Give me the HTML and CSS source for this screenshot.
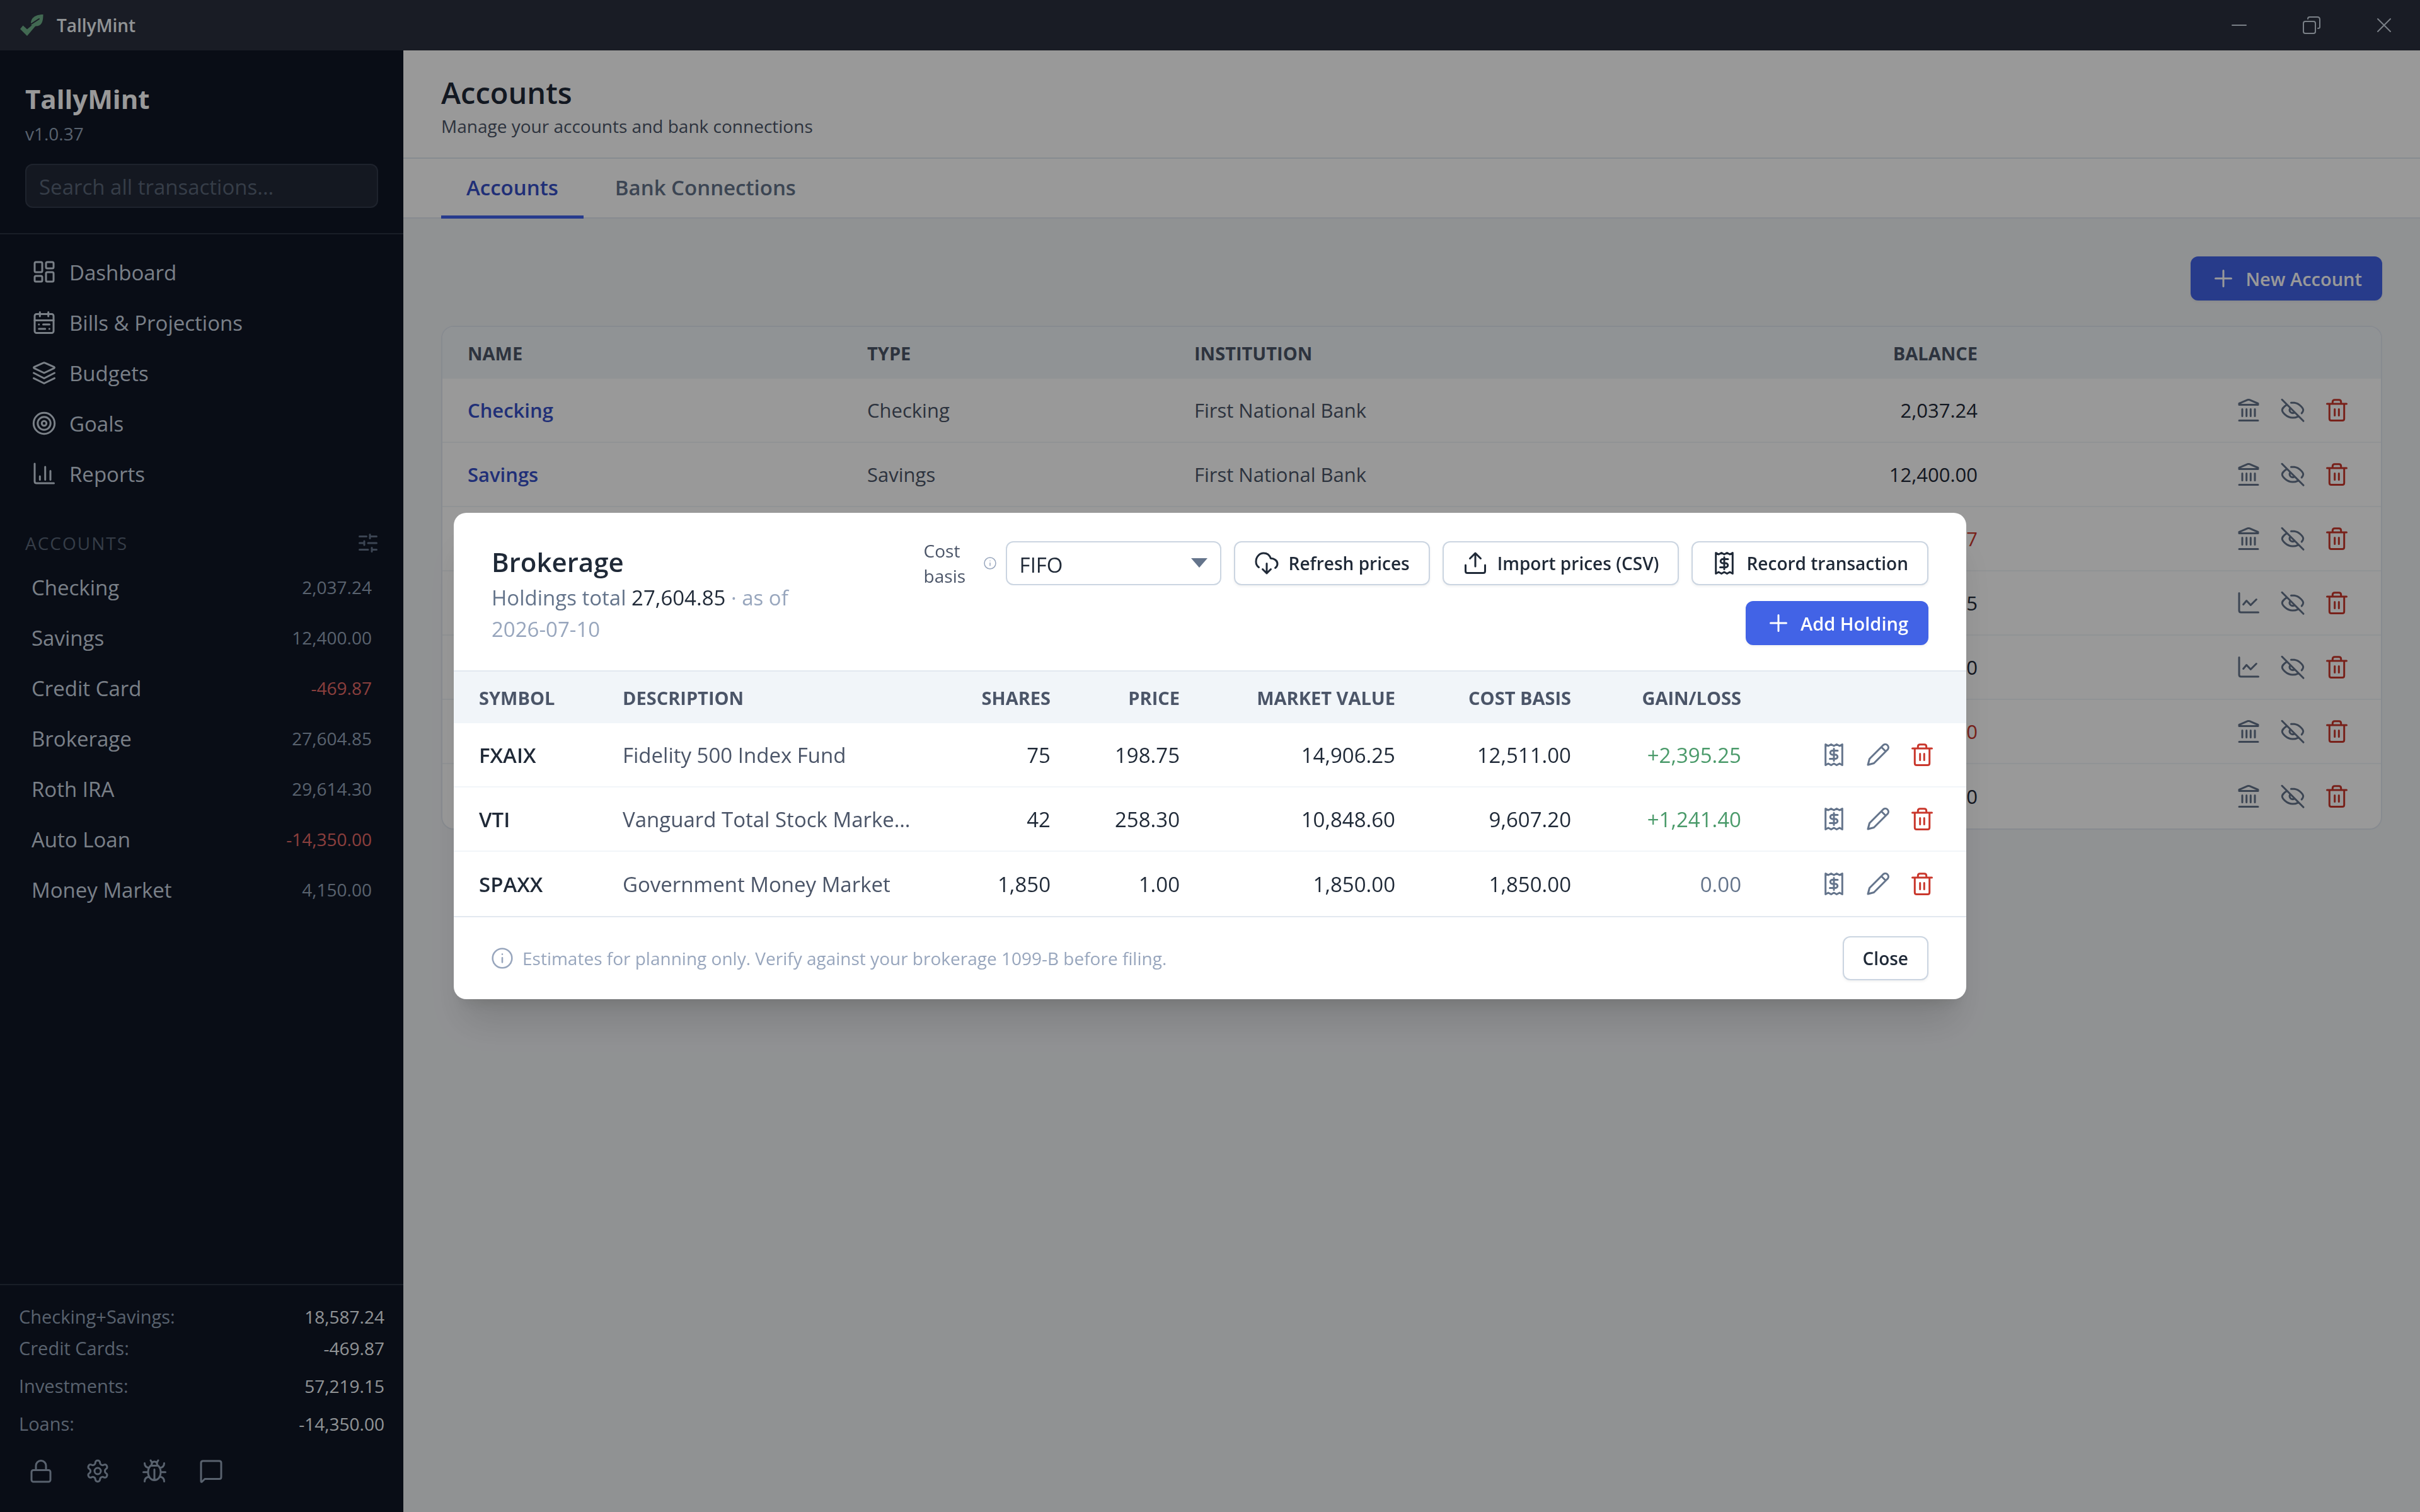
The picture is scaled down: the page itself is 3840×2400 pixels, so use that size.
FILE: index.html
```html
<!DOCTYPE html>
<html lang="en">
<head>
  <meta charset="UTF-8">
  <title>TallyMint</title>
  <link rel="stylesheet" href="styles.css">
</head>
<body>

  <!-- icon set -->
  <svg class="sprite" aria-hidden="true">
    <symbol id="i-dashboard" viewBox="0 0 40 40">
      <rect x="5" y="4" width="12" height="16" rx="2"/><rect x="23" y="4" width="12" height="10" rx="2"/>
      <rect x="5" y="26" width="12" height="9" rx="2"/><rect x="23" y="20" width="12" height="15" rx="2"/>
    </symbol>
    <symbol id="i-calendar" viewBox="0 0 40 40">
      <rect x="5" y="6.5" width="30" height="30" rx="3"/>
      <path d="M5 16.5h30M13.3 3.5V10M26.7 3.5V10M11.7 23h.1M18.5 23h10M11.7 30h10M28.3 30h.1"/>
    </symbol>
    <symbol id="i-layers" viewBox="0 0 40 40">
      <path d="M18.500 4.200q1.500-.7 3 0L35.500 10.300q2 1.200 0 2.400L20 20 4.500 12.700q-2-1.200 0-2.400zM3.500 20L20 28.500 36.500 20M3.500 28.300L20 36.500l16.500-8.200"/>
    </symbol>
    <symbol id="i-target" viewBox="0 0 40 40">
      <circle cx="20" cy="20" r="16.7"/><circle cx="20" cy="20" r="10.2"/><circle cx="20" cy="20" r="3.7"/>
    </symbol>
    <symbol id="i-bars" viewBox="0 0 40 40">
      <path d="M5 4v28q0 3 3 3h27.5M13.3 24v5.5M21.7 9v20.5M30 15.5v14"/>
    </symbol>
    <symbol id="i-sliders" viewBox="0 0 32 32">
      <path d="M2.5 5.5h11M19 2.500v6M19 5.5h10.500M2.500 16H10M10 13v6M16 16h13.500M2.500 26.500H16M22 23.500v6M22 26.500h7.500"/>
    </symbol>
    <symbol id="i-lock" viewBox="0 0 40 40">
      <rect x="5" y="18.5" width="30" height="18.5" rx="3"/><path d="M12 18.5v-7a8 8 0 0 1 16 0v7"/>
    </symbol>
    <symbol id="i-gear" viewBox="0 0 24 24">
      <g stroke-width="1.8"><path d="M12.22 2h-.44a2 2 0 0 0-2 2v.18a2 2 0 0 1-1 1.73l-.43.25a2 2 0 0 1-2 0l-.15-.08a2 2 0 0 0-2.73.73l-.22.38a2 2 0 0 0 .73 2.73l.15.1a2 2 0 0 1 1 1.72v.51a2 2 0 0 1-1 1.74l-.15.09a2 2 0 0 0-.73 2.73l.22.38a2 2 0 0 0 2.73.73l.15-.08a2 2 0 0 1 2 0l.43.25a2 2 0 0 1 1 1.73V20a2 2 0 0 0 2 2h.44a2 2 0 0 0 2-2v-.18a2 2 0 0 1 1-1.73l.43-.25a2 2 0 0 1 2 0l.15.08a2 2 0 0 0 2.73-.73l.22-.39a2 2 0 0 0-.73-2.73l-.15-.08a2 2 0 0 1-1-1.74v-.5a2 2 0 0 1 1-1.74l.15-.09a2 2 0 0 0 .73-2.73l-.22-.38a2 2 0 0 0-2.73-.73l-.15.08a2 2 0 0 1-2 0l-.43-.25a2 2 0 0 1-1-1.73V4a2 2 0 0 0-2-2z"/><circle cx="12" cy="12" r="3"/></g>
    </symbol>
    <symbol id="i-bug" viewBox="0 0 40 40">
      <path d="M14 11.5h12q4 3.5 4 10.5c0 7-4 12.5-10 12.5S10 29 10 22q0-7 4-10.5zM15.5 11q0-6 4.5-6t4.5 6M16 6.5L14 3M24 6.5L26 3M20 17.5V34M2.500 21.700H10M30 21.700h7.500M4.500 7.500q0 6.500 7 7.500M35.500 7.500q0 6.500-7 7.500M4.500 36.500q0-6.500 7-7.500M35.500 36.500q0-6.500-7-7.500"/>
    </symbol>
    <symbol id="i-chat" viewBox="0 0 40 40">
      <path d="M4 36V7q0-3 3-3h26q3 0 3 3v22.500q0 3-3 3H10L5.500 37q-1.500 1-1.500-1z"/>
    </symbol>
    <symbol id="i-bank" viewBox="0 0 40 40">
      <path d="M5 9.500l13.500-5.800q1.500-.6 3 0L35 9.500v2H5zM10 18.500v11M16.700 18.500v11M23.300 18.500v11M30 18.500v11M5 36.500h30"/>
    </symbol>
    <symbol id="i-chart" viewBox="0 0 40 40">
      <path d="M5 4.500V32q0 3 3 3h27.500M11.700 22.500l5-6 6.600 7 9-9"/>
    </symbol>
    <symbol id="i-eye-off" viewBox="0 0 40 40">
      <path d="M3 3.300L37 37.300M9.500 12.300C5.500 15 3.300 18.500 3.300 20c0 3 6.700 12 16.700 12q4.500 0 8-1.700M17.500 8.300Q20 8 22.500 8.300C31 9.500 36.700 17 36.700 20q0 1.800-2.500 5M15.800 16.800q-1.800 4 .9 6.500 3 2.400 6.800.4"/>
    </symbol>
    <symbol id="i-trash" viewBox="0 0 40 40">
      <path d="M4.500 10h31M8.300 10v23.500q0 3 3 3h17.400q3 0 3-3V10M13.300 10V7q0-3.300 3.300-3.300h6.800q3.300 0 3.300 3.300v3M16.700 18.500v10M23.300 18.500v10"/>
    </symbol>
    <symbol id="i-receipt" viewBox="0 0 40 40">
      <path d="M6.700 3.500l4.400 2.500 4.500-2.500L20 6l4.400-2.500L28.900 6l4.400-2.500v33L28.900 34l-4.500 2.500L20 34l-4.400 2.500-4.500-2.500-4.400 2.500z"/>
      <path d="M26 13.500h-8.500a3.200 3.200 0 0 0 0 6.500h5a3.200 3.200 0 0 1 0 6.500h-9M20 10.500v19"/>
    </symbol>
    <symbol id="i-pencil" viewBox="0 0 40 40">
      <path d="M4 36L6.500 26.500 28.500 4.500a5 5 0 0 1 7 7L13.500 33.500zM25.500 8l6.500 6.500"/>
    </symbol>
    <symbol id="i-cloud-down" viewBox="0 0 40 40">
      <path d="M7.500 26.500C4.500 24.500 3 21.500 3 17.500 3 9.500 9 4 15 4q8.500 0 11.300 8.300C32 12.300 37 16 37 21q0 4-3.500 6.500M20 20.500V36M13.500 29.500L20 36l6.500-6.500"/>
    </symbol>
    <symbol id="i-upload" viewBox="0 0 40 40">
      <path d="M20 25V5M11.500 12.500L20 4l8.500 8.500M4.500 23v9.500q0 3 3 3h25q3 0 3-3V23"/>
    </symbol>
    <symbol id="i-plus" viewBox="0 0 40 40">
      <path d="M20 7.500v25M7.500 20h25"/>
    </symbol>
    <symbol id="i-info" viewBox="0 0 40 40">
      <circle cx="20" cy="20" r="18"/><path d="M20 19v8.500M20 12.500v.1"/>
    </symbol>
  </svg>

  <div class="app">
    <header class="titlebar">
      <svg class="logo" viewBox="0 0 40 40" aria-hidden="true">
        <path d="M2 26l4.500-5.500 6.500 6L22 19l5 1.500L13 37z"/>
        <path d="M19.500 20C17 9 26 3 38.500 3c0 11-2 19-13 18.500z"/>
        <path class="vein" d="M19 18.500L32 10"/>
      </svg>
      <span class="titlebar-name">TallyMint</span>
      <div class="window-buttons">
        <button type="button" aria-label="Minimize"><svg viewBox="0 0 30 30"><path d="M4 15h22"/></svg></button>
        <button type="button" aria-label="Restore"><svg viewBox="0 0 30 30"><rect x="2" y="9" width="19" height="19" rx="3"/><path d="M9 5q0-3 3-3h12q4 0 4 4v12q0 2-3 2"/></svg></button>
        <button type="button" aria-label="Close window"><svg viewBox="0 0 30 30"><path d="M5 5l20 20M25 5L5 25"/></svg></button>
      </div>
    </header>

    <aside class="sidebar">
      <div class="brand">
        <div class="brand-name">TallyMint</div>
        <div class="version">v1.0.37</div>
        <input type="search" class="search" placeholder="Search all transactions..." aria-label="Search all transactions">
      </div>

      <nav class="nav">
        <a href="#dashboard"><svg class="icon"><use href="#i-dashboard"/></svg>Dashboard</a>
        <a href="#bills"><svg class="icon"><use href="#i-calendar"/></svg>Bills &amp; Projections</a>
        <a href="#budgets"><svg class="icon"><use href="#i-layers"/></svg>Budgets</a>
        <a href="#goals"><svg class="icon"><use href="#i-target"/></svg>Goals</a>
        <a href="#reports"><svg class="icon"><use href="#i-bars"/></svg>Reports</a>
      </nav>

      <div class="side-heading">
        <span>ACCOUNTS</span>
        <button type="button" aria-label="Account display options"><svg><use href="#i-sliders"/></svg></button>
      </div>
      <div class="side-accounts">
        <a href="#checking">Checking<span>2,037.24</span></a>
        <a href="#savings">Savings<span>12,400.00</span></a>
        <a href="#credit-card">Credit Card<span class="neg">-469.87</span></a>
        <a href="#brokerage">Brokerage<span>27,604.85</span></a>
        <a href="#roth-ira">Roth IRA<span>29,614.30</span></a>
        <a href="#auto-loan">Auto Loan<span class="neg">-14,350.00</span></a>
        <a href="#money-market">Money Market<span>4,150.00</span></a>
      </div>

      <div class="side-footer">
        <div class="total">Checking+Savings:<span>18,587.24</span></div>
        <div class="total">Credit Cards:<span>-469.87</span></div>
        <div class="total spaced">Investments:<span>57,219.15</span></div>
        <div class="total spaced">Loans:<span>-14,350.00</span></div>
        <div class="side-tools">
          <button type="button" aria-label="Lock"><svg class="icon"><use href="#i-lock"/></svg></button>
          <button type="button" aria-label="Settings"><svg class="icon"><use href="#i-gear"/></svg></button>
          <button type="button" aria-label="Report a bug"><svg class="icon"><use href="#i-bug"/></svg></button>
          <button type="button" aria-label="Feedback"><svg class="icon"><use href="#i-chat"/></svg></button>
        </div>
      </div>
    </aside>

    <main class="main">
      <div class="page-header">
        <h1>Accounts</h1>
        <p>Manage your accounts and bank connections</p>
      </div>
      <div class="tabs">
        <a href="#accounts" class="tab active">Accounts</a>
        <a href="#connections" class="tab">Bank Connections</a>
      </div>

      <div class="content">
        <div class="toolbar">
          <button type="button" class="btn btn-primary"><svg class="icon"><use href="#i-plus"/></svg>New Account</button>
        </div>

        <div class="card">
          <table class="accounts">
            <thead>
              <tr><th class="c-name">NAME</th><th class="c-type">TYPE</th><th>INSTITUTION</th><th class="c-balance num">BALANCE</th><th class="c-tools"></th></tr>
            </thead>
            <tbody>
              <tr>
                <td><a href="#checking">Checking</a></td><td>Checking</td><td>First National Bank</td><td class="num">2,037.24</td>
                <td><div class="tools"><button type="button" aria-label="Register"><svg class="icon"><use href="#i-bank"/></svg></button><button type="button" aria-label="Hide"><svg class="icon"><use href="#i-eye-off"/></svg></button><button type="button" class="danger" aria-label="Delete"><svg class="icon"><use href="#i-trash"/></svg></button></div></td>
              </tr>
              <tr>
                <td><a href="#savings">Savings</a></td><td>Savings</td><td>First National Bank</td><td class="num">12,400.00</td>
                <td><div class="tools"><button type="button" aria-label="Register"><svg class="icon"><use href="#i-bank"/></svg></button><button type="button" aria-label="Hide"><svg class="icon"><use href="#i-eye-off"/></svg></button><button type="button" class="danger" aria-label="Delete"><svg class="icon"><use href="#i-trash"/></svg></button></div></td>
              </tr>
              <tr>
                <td><a href="#credit-card">Credit Card</a></td><td></td><td></td><td class="num neg">-469.87</td>
                <td><div class="tools"><button type="button" aria-label="Register"><svg class="icon"><use href="#i-bank"/></svg></button><button type="button" aria-label="Hide"><svg class="icon"><use href="#i-eye-off"/></svg></button><button type="button" class="danger" aria-label="Delete"><svg class="icon"><use href="#i-trash"/></svg></button></div></td>
              </tr>
              <tr>
                <td><a href="#brokerage">Brokerage</a></td><td></td><td></td><td class="num">27,604.85</td>
                <td><div class="tools"><button type="button" aria-label="Holdings"><svg class="icon"><use href="#i-chart"/></svg></button><button type="button" aria-label="Hide"><svg class="icon"><use href="#i-eye-off"/></svg></button><button type="button" class="danger" aria-label="Delete"><svg class="icon"><use href="#i-trash"/></svg></button></div></td>
              </tr>
              <tr>
                <td><a href="#roth-ira">Roth IRA</a></td><td></td><td></td><td class="num">29,614.30</td>
                <td><div class="tools"><button type="button" aria-label="Holdings"><svg class="icon"><use href="#i-chart"/></svg></button><button type="button" aria-label="Hide"><svg class="icon"><use href="#i-eye-off"/></svg></button><button type="button" class="danger" aria-label="Delete"><svg class="icon"><use href="#i-trash"/></svg></button></div></td>
              </tr>
              <tr>
                <td><a href="#auto-loan">Auto Loan</a></td><td></td><td></td><td class="num neg">-14,350.00</td>
                <td><div class="tools"><button type="button" aria-label="Register"><svg class="icon"><use href="#i-bank"/></svg></button><button type="button" aria-label="Hide"><svg class="icon"><use href="#i-eye-off"/></svg></button><button type="button" class="danger" aria-label="Delete"><svg class="icon"><use href="#i-trash"/></svg></button></div></td>
              </tr>
              <tr>
                <td><a href="#money-market">Money Market</a></td><td></td><td></td><td class="num">4,150.00</td>
                <td><div class="tools"><button type="button" aria-label="Register"><svg class="icon"><use href="#i-bank"/></svg></button><button type="button" aria-label="Hide"><svg class="icon"><use href="#i-eye-off"/></svg></button><button type="button" class="danger" aria-label="Delete"><svg class="icon"><use href="#i-trash"/></svg></button></div></td>
              </tr>
            </tbody>
          </table>
        </div>
      </div>
    </main>
  </div>

  <div class="overlay">
    <div class="modal" role="dialog" aria-modal="true" aria-labelledby="modal-title">
      <div class="modal-header">
        <div class="modal-heading">
          <h2 id="modal-title">Brokerage</h2>
          <p>Holdings total <strong>27,604.85</strong> <span>· as of 2026-07-10</span></p>
        </div>
        <div class="modal-controls">
          <div class="cost-basis">
            <label for="cost-basis">Cost basis</label>
            <svg class="hint"><use href="#i-info"/></svg>
            <div class="select-wrap">
              <select id="cost-basis">
                <option>FIFO</option>
                <option>LIFO</option>
                <option>Average</option>
              </select>
            </div>
          </div>
          <button type="button" class="btn"><svg class="icon"><use href="#i-cloud-down"/></svg>Refresh prices</button>
          <button type="button" class="btn"><svg class="icon"><use href="#i-upload"/></svg>Import prices (CSV)</button>
          <button type="button" class="btn"><svg class="icon"><use href="#i-receipt"/></svg>Record transaction</button>
          <button type="button" class="btn btn-primary"><svg class="icon"><use href="#i-plus"/></svg>Add Holding</button>
        </div>
      </div>

      <table class="holdings">
        <thead>
          <tr>
            <th class="h-symbol">SYMBOL</th><th>DESCRIPTION</th><th class="h-shares num">SHARES</th><th class="h-price num">PRICE</th>
            <th class="h-value num">MARKET VALUE</th><th class="h-cost num">COST BASIS</th><th class="h-gain num">GAIN/LOSS</th><th class="h-tools"></th>
          </tr>
        </thead>
        <tbody>
          <tr>
            <td class="symbol">FXAIX</td><td class="desc">Fidelity 500 Index Fund</td><td class="num">75</td><td class="num">198.75</td>
            <td class="num">14,906.25</td><td class="num">12,511.00</td><td class="num gain">+2,395.25</td>
            <td><div class="tools"><button type="button" aria-label="Record transaction"><svg class="icon"><use href="#i-receipt"/></svg></button><button type="button" aria-label="Edit"><svg class="icon"><use href="#i-pencil"/></svg></button><button type="button" class="danger" aria-label="Delete"><svg class="icon"><use href="#i-trash"/></svg></button></div></td>
          </tr>
          <tr>
            <td class="symbol">VTI</td><td class="desc">Vanguard Total Stock Market ETF</td><td class="num">42</td><td class="num">258.30</td>
            <td class="num">10,848.60</td><td class="num">9,607.20</td><td class="num gain">+1,241.40</td>
            <td><div class="tools"><button type="button" aria-label="Record transaction"><svg class="icon"><use href="#i-receipt"/></svg></button><button type="button" aria-label="Edit"><svg class="icon"><use href="#i-pencil"/></svg></button><button type="button" class="danger" aria-label="Delete"><svg class="icon"><use href="#i-trash"/></svg></button></div></td>
          </tr>
          <tr>
            <td class="symbol">SPAXX</td><td class="desc">Government Money Market</td><td class="num">1,850</td><td class="num">1.00</td>
            <td class="num">1,850.00</td><td class="num">1,850.00</td><td class="num flat">0.00</td>
            <td><div class="tools"><button type="button" aria-label="Record transaction"><svg class="icon"><use href="#i-receipt"/></svg></button><button type="button" aria-label="Edit"><svg class="icon"><use href="#i-pencil"/></svg></button><button type="button" class="danger" aria-label="Delete"><svg class="icon"><use href="#i-trash"/></svg></button></div></td>
          </tr>
        </tbody>
      </table>

      <div class="modal-footer">
        <svg class="note-icon"><use href="#i-info"/></svg>
        <span>Estimates for planning only. Verify against your brokerage 1099-B before filing.</span>
        <button type="button" class="btn">Close</button>
      </div>
    </div>
  </div>

</body>
</html>
```
FILE: styles.css
```css
* {
  box-sizing: border-box;
}

body {
  margin: 0;
  font-family: 'Open Sans', 'Noto Sans', sans-serif;
  font-size: 33px;
  color: #1f2937;
}

button,
input,
select {
  font-family: inherit;
}

a {
  color: inherit;
  text-decoration: none;
}

h1,
h2,
p {
  margin: 0;
}

svg {
  fill: none;
  stroke: currentColor;
  stroke-width: 3;
  stroke-linecap: round;
  stroke-linejoin: round;
  flex-shrink: 0;
}

.sprite {
  display: none;
}

.icon {
  display: block;
  width: 40px;
  height: 40px;
}

.num {
  text-align: right;
}

/* shell */

.app {
  display: grid;
  grid-template-columns: 640px 1fr;
  grid-template-rows: 80px 1fr;
  height: 100vh;
  overflow: hidden;
}

.titlebar {
  grid-column: 1 / -1;
  display: flex;
  align-items: center;
  gap: 20px;
  padding-left: 30px;
  background: #2a303e;
  color: #f1f5f9;
}

.logo {
  width: 40px;
  height: 40px;
  fill: #6eaf89;
  stroke: none;
}

.logo .vein {
  stroke: #2a303e;
  stroke-width: 2;
}

.titlebar-name {
  font-size: 28px;
  font-weight: 600;
}

.window-buttons {
  display: flex;
  align-self: stretch;
  margin-left: auto;
}

.window-buttons button {
  display: flex;
  align-items: center;
  justify-content: center;
  width: 115px;
  padding: 0;
  border: 0;
  background: none;
  color: #cbd5e1;
}

.window-buttons svg {
  width: 30px;
  height: 30px;
  stroke-width: 2;
}

/* sidebar */

.sidebar {
  display: flex;
  flex-direction: column;
  background: #0f1626;
  color: #cbd5e1;
}

.brand {
  padding: 42px 40px 40px;
  border-bottom: 2px solid #2b3241;
}

.brand-name {
  font-size: 42px;
  font-weight: 700;
  line-height: 70px;
  color: #fff;
}

.version {
  font-size: 28px;
  line-height: 40px;
  color: #94a3b8;
}

.search {
  display: block;
  width: 100%;
  height: 70px;
  margin-top: 28px;
  padding: 2px 20px 0;
  border: 2px solid #333b4b;
  border-radius: 12px;
  background: #222938;
  color: #f1f5f9;
  font-size: 33px;
}

.search::placeholder {
  color: #5b6779;
}

.nav {
  padding: 20px 0 40px;
}

.nav a {
  display: flex;
  align-items: center;
  gap: 20px;
  height: 80px;
  padding: 0 50px;
}

.side-heading {
  display: flex;
  align-items: center;
  justify-content: space-between;
  height: 60px;
  padding: 0 40px;
  font-size: 28px;
  letter-spacing: 2px;
  color: #5b6779;
}

.side-heading button {
  padding: 0;
  border: 0;
  background: none;
  color: #64748b;
}

.side-heading svg {
  display: block;
  width: 32px;
  height: 32px;
}

.side-accounts {
  flex: 1;
}

.side-accounts a {
  display: flex;
  align-items: center;
  justify-content: space-between;
  height: 80px;
  padding: 0 50px;
}

.side-accounts span {
  font-size: 28px;
  color: #94a3b8;
}

.side-accounts .neg {
  color: #e66a66;
}

.side-footer {
  padding: 25px 30px 35px;
  border-top: 2px solid #2b3241;
  font-size: 29px;
  line-height: 50px;
  color: #94a3b8;
}

.total {
  display: flex;
  justify-content: space-between;
}

.total span {
  font-size: 28px;
  color: #f1f5f9;
}

.spaced {
  margin-top: 10px;
}

.side-tools {
  display: flex;
  margin: 20px -10px 0;
}

.side-tools button {
  width: 90px;
  height: 60px;
  padding: 0 25px;
  border: 0;
  background: none;
  color: #94a3b8;
}

/* main */

.main {
  background: #f1f3f6;
}

.page-header {
  padding: 35px 60px 30px;
  border-bottom: 2px solid #e2e8f0;
  background: #fff;
}

.page-header h1 {
  font-size: 47px;
  font-weight: 600;
  line-height: 65px;
}

.page-header p {
  font-size: 28px;
  line-height: 40px;
  color: #4b5568;
}

.tabs {
  display: flex;
  gap: 10px;
  height: 95px;
  padding: 0 60px;
  border-bottom: 2px solid #e2e8f0;
  background: #fff;
}

.tab {
  height: 95px;
  padding: 0 40px;
  border-bottom: 5px solid transparent;
  font-weight: 600;
  line-height: 92px;
  color: #64748b;
}

.tab.active {
  border-color: #4263eb;
  color: #364fc7;
}

.content {
  padding: 60px;
}

.toolbar {
  display: flex;
  justify-content: flex-end;
  margin-bottom: 40px;
}

.btn {
  display: inline-flex;
  align-items: center;
  gap: 15px;
  height: 70px;
  padding: 0 30px;
  border: 2px solid #cbd5e1;
  border-radius: 12px;
  background: #fff;
  box-shadow: 0 2px 4px rgba(0, 0, 0, 0.06);
  color: #1f2937;
  font-size: 28px;
  font-weight: 600;
  white-space: nowrap;
  cursor: pointer;
}

.btn-primary {
  border-color: #4263e6;
  background: #4263e6;
  color: #fff;
  font-size: 29px;
}

.card {
  overflow: hidden;
  border: 2px solid #e2e8f0;
  border-radius: 20px;
  background: #fff;
}

/* tables */

table {
  width: 100%;
  table-layout: fixed;
  border-collapse: separate;
  border-spacing: 0;
}

th {
  height: 82px;
  padding: 0 40px;
  background: #f1f5f9;
  color: #4b5568;
  font-size: 29px;
  font-weight: 700;
  text-align: left;
}

th.num {
  text-align: right;
}

td {
  height: 102px;
  padding: 0 40px;
  border-bottom: 2px solid #f1f5f9;
  white-space: nowrap;
}

tbody tr:last-child td {
  border-bottom: 0;
}

.accounts td {
  font-size: 31px;
  color: #4b5568;
}

.accounts td.num {
  color: #1f2937;
}

.accounts td.neg {
  color: #c9372c;
}

.accounts td a {
  font-weight: 600;
  color: #364fc7;
}

.c-name {
  width: 634px;
}

.c-type {
  width: 519px;
}

.c-balance,
.c-tools {
  width: 600px;
}

.tools {
  display: flex;
  justify-content: flex-end;
  gap: 10px;
}

.tools button {
  padding: 10px;
  border: 0;
  background: none;
  color: #64748b;
  cursor: pointer;
}

.tools .danger {
  color: #c9372c;
}

/* holdings dialog */

.overlay {
  position: fixed;
  inset: 0;
  display: flex;
  align-items: center;
  justify-content: center;
  background: rgba(0, 0, 0, 0.4);
}

.modal {
  width: 2400px;
  max-width: 95%;
  overflow: hidden;
  border-radius: 20px;
  background: #fff;
  box-shadow: 0 50px 62px -12px rgba(0, 0, 0, 0.12), 0 20px 25px -15px rgba(0, 0, 0, 0.12);
}

.modal-header {
  display: flex;
  justify-content: space-between;
  gap: 20px;
  padding: 45px 60px 40px;
  border-bottom: 2px solid #e2e8f0;
}

.modal-heading {
  width: 500px;
  line-height: 50px;
  color: #64748b;
}

.modal-heading h2 {
  font-size: 42px;
  font-weight: 600;
  line-height: 65px;
  color: #1f2937;
}

.modal-heading strong {
  font-weight: 400;
  color: #1f2937;
}

.modal-heading span {
  color: #98a6bd;
}

.modal-controls {
  display: flex;
  flex: 1;
  flex-wrap: wrap;
  justify-content: flex-end;
  gap: 25px 20px;
}

.cost-basis {
  display: flex;
  align-items: center;
  gap: 15px;
  height: 70px;
}

.cost-basis label {
  width: 80px;
  font-size: 28px;
  line-height: 40px;
  color: #4b5568;
}

.hint {
  width: 20px;
  height: 20px;
  color: #98a6bd;
}

.select-wrap {
  position: relative;
}

.select-wrap::after {
  content: "";
  position: absolute;
  top: 27px;
  right: 22px;
  border: 13px solid transparent;
  border-top: 15px solid #64748b;
  border-bottom: 0;
  pointer-events: none;
}

select {
  display: block;
  width: 342px;
  height: 70px;
  padding: 4px 20px 0;
  border: 2px solid #cbd5e1;
  border-radius: 12px;
  background: #fff;
  color: #1f2937;
  font-size: 33px;
  appearance: none;
}

.h-symbol {
  width: 228px;
}

.h-shares {
  width: 219px;
}

.h-price {
  width: 205px;
}

.h-value {
  width: 342px;
}

.h-cost {
  width: 279px;
}

.h-gain {
  width: 270px;
}

.h-tools {
  width: 317px;
}

.symbol {
  font-weight: 600;
}

.desc {
  overflow: hidden;
  text-overflow: ellipsis;
  color: #4b5568;
}

.gain {
  color: #4a9a6a;
}

.flat {
  color: #64748b;
}

.modal-footer {
  display: flex;
  align-items: center;
  gap: 15px;
  padding: 30px 60px;
  border-top: 2px solid #e2e8f0;
  color: #98a6bd;
  font-size: 28px;
}

.modal-footer .btn {
  margin-left: auto;
}

.note-icon {
  width: 34px;
  height: 34px;
}
```
